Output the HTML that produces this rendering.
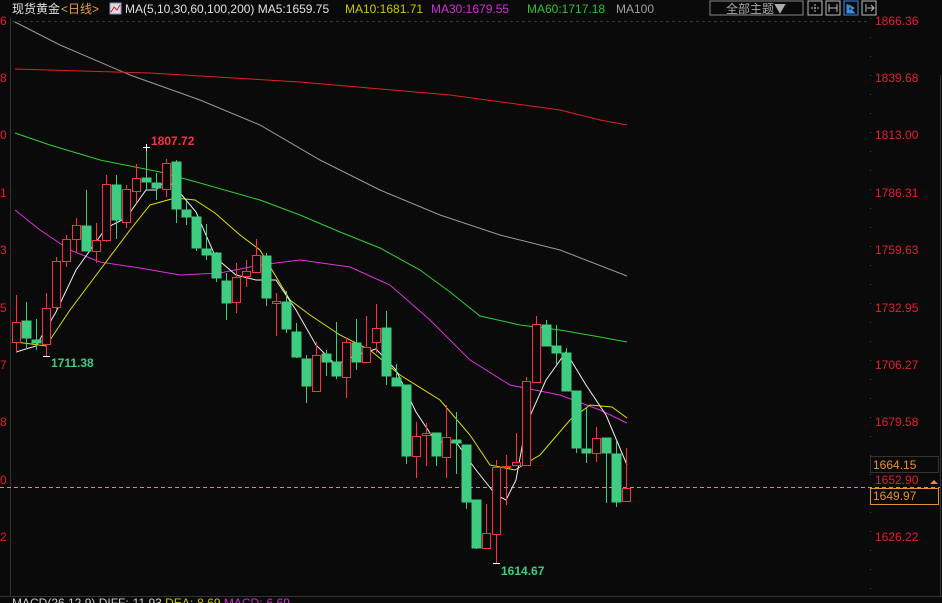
<!DOCTYPE html>
<html><head><meta charset="utf-8"><style>
html,body{margin:0;padding:0;background:#0a0a0a;width:942px;height:603px;overflow:hidden;font-family:"Liberation Sans","Noto Sans CJK SC",sans-serif}
</style></head><body>
<svg width="942" height="603" xmlns="http://www.w3.org/2000/svg" style="position:absolute;left:0;top:0">
<rect width="942" height="603" fill="#0a0a0a"/>
<!-- top bar -->
<g font-size="12" font-family="Liberation Sans,Noto Sans CJK SC,sans-serif">
<text x="12" y="13" fill="#e0e0e0">现货黄金</text>
<text x="61" y="13" fill="#e8a040">&lt;日线&gt;</text>
<rect x="110" y="3" width="11" height="11" fill="#ddd" stroke="#8888cc"/>
<polyline points="111,12 114,7 117,10 120,5" stroke="#d02020" fill="none"/>
<text x="125" y="13" fill="#e0e0e0">MA(5,10,30,60,100,200) MA5:1659.75</text>
<text x="345" y="13" fill="#c8c800">MA10:1681.71</text>
<text x="431" y="13" fill="#d030d0">MA30:1679.55</text>
<text x="527" y="13" fill="#30c030">MA60:1717.18</text>
<text x="616" y="13" fill="#a0a0a0">MA100</text>
</g>
<rect x="710" y="1" width="93" height="14" fill="none" stroke="#888"/>
<text x="726" y="13" fill="#aaa" font-size="12" font-family="Noto Sans CJK SC,sans-serif">全部主题▼</text>
<rect x="808" y="1" width="14" height="14" fill="none" stroke="#bbb"/>
<path d="M815 4v8M811 8h8" stroke="#bbb" stroke-dasharray="2 1"/>
<rect x="826" y="1" width="14" height="14" fill="none" stroke="#bbb"/>
<path d="M829 4v8M837 4v8M829 8h8" stroke="#bbb"/>
<rect x="844" y="1" width="14" height="14" fill="none" stroke="#3a8ee0"/>
<path d="M847 4v9h8M849 5l5 3-5 3z" stroke="#3a8ee0" fill="#3a8ee0"/>
<rect x="862" y="1" width="14" height="14" fill="none" stroke="#bbb"/>
<path d="M866 4v8M867 8h7M871 5l3 3-3 3" stroke="#bbb" fill="none"/>
<!-- frame -->
<line x1="10.5" y1="18" x2="10.5" y2="596" stroke="#333"/>
<line x1="870.5" y1="18" x2="870.5" y2="596" stroke="#444" stroke-dasharray="1 18"/>
<line x1="940.5" y1="75" x2="940.5" y2="596" stroke="#333"/>
<line x1="0" y1="596.5" x2="942" y2="596.5" stroke="#333"/>
<line x1="12" y1="21.5" x2="870" y2="21.5" stroke="#333" stroke-dasharray="3 3"/>
<g fill="#e02030" font-size="12">
<text x="0" y="25">6</text><text x="0" y="82">8</text><text x="0" y="139">0</text><text x="0" y="197">1</text><text x="0" y="254">3</text><text x="0" y="312">5</text><text x="0" y="369">7</text><text x="0" y="426">8</text><text x="0" y="484">0</text><text x="0" y="541">2</text>
<text x="875" y="25">1866.36</text><text x="875" y="82">1839.68</text><text x="875" y="139">1813.00</text><text x="875" y="197">1786.31</text><text x="875" y="254">1759.63</text><text x="875" y="312">1732.95</text><text x="875" y="369">1706.27</text><text x="875" y="426">1679.58</text><text x="875" y="484">1652.90</text><text x="875" y="541">1626.22</text>
</g>
<rect x="870.5" y="456.5" width="68" height="16" fill="#0a0a0a" stroke="#333"/>
<text x="873" y="469" fill="#e89030" font-size="12">1664.15</text>
<line x1="0" y1="487.5" x2="940" y2="487.5" stroke="#e89030" stroke-dasharray="4 3"/>
<rect x="870.5" y="488.5" width="68" height="16" fill="#0a0a0a" stroke="#e89030"/>
<text x="873" y="500" fill="#e89030" font-size="12">1649.97</text>
<path d="M930 484l4-4 4 4z" fill="#e89030"/>
<!-- MA lines -->
<g fill="none" stroke-width="1">
<polyline stroke="#999" points="15,22 60,45 130,75 200,100 260,125 320,160 380,190 440,215 500,235 560,250 627,276"/>
<polyline stroke="#e02020" points="15,69 150,73 300,82 450,95 560,110 600,120 627,125"/>
<polyline stroke="#30d030" points="15,133 50,145 100,160 160,172 200,183 260,200 300,215 340,232 380,248 420,270 450,292 480,316 520,325 560,330 600,337 627,342"/>
<polyline stroke="#e030e0" points="15,210 40,230 70,250 100,262 140,268 180,275 220,273 260,265 300,260 350,267 390,285 430,320 470,360 510,385 560,395 600,410 627,423"/>
<polyline stroke="#e0e000" points="16,342 46,346 70,310 100,270 130,230 150,205 175,198 195,200 215,213 240,235 260,250 290,300 310,315 340,335 370,350 400,375 440,400 470,435 490,465 515,470 540,455 570,420 590,405 612,407 627,418"/>
<polyline stroke="#f0f0f0" points="16,352 36,346 56,312 76,270 106,228 126,218 146,190 156,190 166,180 176,188 196,212 216,258 236,275 256,280 276,280 296,310 316,345 336,365 356,355 376,349 396,370 416,412 436,442 456,442 476,470 496,495 506,500 516,480 526,425 546,380 566,352 586,385 606,415 627,465"/>
</g>
<!-- candles -->
<g id="c" stroke-width="1">
<!-- G: filled green; R: hollow red -->
<g stroke="#3dcc80" fill="#3dcc80">
<line x1="26.5" y1="302" x2="26.5" y2="348"/><rect x="22" y="321" width="9" height="17"/>
<line x1="36.5" y1="319" x2="36.5" y2="350"/><rect x="32" y="340" width="9" height="3"/>
<line x1="86.5" y1="190" x2="86.5" y2="251"/><rect x="82" y="226" width="9" height="25"/>
<line x1="116.5" y1="175" x2="116.5" y2="239"/><rect x="112" y="185" width="9" height="35"/>
<line x1="146.5" y1="147" x2="146.5" y2="190"/><rect x="142" y="178" width="9" height="4"/>
<line x1="156.5" y1="173" x2="156.5" y2="200"/><rect x="152" y="183" width="9" height="5"/>
<line x1="176.5" y1="160" x2="176.5" y2="223"/><rect x="172" y="162" width="9" height="47"/>
<line x1="186.5" y1="201" x2="186.5" y2="225"/><rect x="182" y="210" width="9" height="7"/>
<line x1="196.5" y1="217" x2="196.5" y2="251"/><rect x="192" y="217" width="9" height="31"/>
<line x1="206.5" y1="224" x2="206.5" y2="260"/><rect x="202" y="249" width="9" height="6"/>
<line x1="216.5" y1="252" x2="216.5" y2="282"/><rect x="212" y="253" width="9" height="25"/>
<line x1="226.5" y1="273" x2="226.5" y2="320"/><rect x="222" y="281" width="9" height="22"/>
<line x1="266.5" y1="253" x2="266.5" y2="306"/><rect x="262" y="256" width="9" height="42"/>
<line x1="286.5" y1="291" x2="286.5" y2="333"/><rect x="282" y="302" width="9" height="27"/>
<line x1="296.5" y1="323" x2="296.5" y2="358"/><rect x="292" y="332" width="9" height="25"/>
<line x1="306.5" y1="355" x2="306.5" y2="403"/><rect x="302" y="359" width="9" height="27"/>
<line x1="326.5" y1="350" x2="326.5" y2="376"/><rect x="322" y="354" width="9" height="8"/>
<line x1="336.5" y1="322" x2="336.5" y2="379"/><rect x="332" y="362" width="9" height="14"/>
<line x1="356.5" y1="319" x2="356.5" y2="370"/><rect x="352" y="343" width="9" height="19"/>
<line x1="386.5" y1="311" x2="386.5" y2="385"/><rect x="382" y="328" width="9" height="48"/>
<line x1="396.5" y1="364" x2="396.5" y2="386"/><rect x="392" y="378" width="9" height="8"/>
<line x1="406.5" y1="385" x2="406.5" y2="464"/><rect x="402" y="385" width="9" height="71"/>
<line x1="436.5" y1="433" x2="436.5" y2="466"/><rect x="432" y="433" width="9" height="23"/>
<line x1="456.5" y1="412" x2="456.5" y2="474"/><rect x="452" y="440" width="9" height="3"/>
<line x1="466.5" y1="445" x2="466.5" y2="509"/><rect x="462" y="445" width="9" height="57"/>
<line x1="476.5" y1="500" x2="476.5" y2="549"/><rect x="472" y="500" width="9" height="48"/>
<line x1="546.5" y1="320" x2="546.5" y2="346"/><rect x="542" y="325" width="9" height="21"/>
<line x1="556.5" y1="325" x2="556.5" y2="364"/><rect x="552" y="346" width="9" height="7"/>
<line x1="566.5" y1="348" x2="566.5" y2="391"/><rect x="562" y="353" width="9" height="38"/>
<line x1="576.5" y1="391" x2="576.5" y2="453"/><rect x="572" y="391" width="9" height="57"/>
<line x1="586.5" y1="408" x2="586.5" y2="463"/><rect x="582" y="449" width="9" height="4"/>
<line x1="606.5" y1="438" x2="606.5" y2="503"/><rect x="602" y="438" width="9" height="15"/>
<line x1="616.5" y1="441" x2="616.5" y2="507"/><rect x="612" y="454" width="9" height="48"/>
</g>
<g stroke="#ff3040" fill="#0a0a0a">
<line x1="16.5" y1="295" x2="16.5" y2="352"/><rect x="12.5" y="322.5" width="8" height="20"/>
<line x1="46.5" y1="293" x2="46.5" y2="356"/><rect x="42.5" y="308.5" width="8" height="36"/>
<line x1="56.5" y1="257" x2="56.5" y2="310"/><rect x="52.5" y="261.5" width="8" height="46"/>
<line x1="66.5" y1="235" x2="66.5" y2="267"/><rect x="62.5" y="239.5" width="8" height="22"/>
<line x1="76.5" y1="218" x2="76.5" y2="253"/><rect x="72.5" y="225.5" width="8" height="14"/>
<line x1="96.5" y1="223" x2="96.5" y2="263"/><rect x="92.5" y="240.5" width="8" height="11"/>
<line x1="106.5" y1="175" x2="106.5" y2="242"/><rect x="102.5" y="184.5" width="8" height="56"/>
<line x1="126.5" y1="185" x2="126.5" y2="228"/><rect x="122.5" y="189.5" width="8" height="33"/>
<line x1="136.5" y1="164" x2="136.5" y2="202"/><rect x="132.5" y="178.5" width="8" height="13"/>
<line x1="166.5" y1="159" x2="166.5" y2="197"/><rect x="162.5" y="163.5" width="8" height="26"/>
<line x1="236.5" y1="263" x2="236.5" y2="313"/><rect x="232.5" y="277.5" width="8" height="25"/>
<line x1="246.5" y1="260" x2="246.5" y2="287"/><rect x="242.5" y="271.5" width="8" height="5"/>
<line x1="256.5" y1="239" x2="256.5" y2="272"/><rect x="252.5" y="255.5" width="8" height="17"/>
<line x1="276.5" y1="293" x2="276.5" y2="336"/><rect x="272.5" y="301.5" width="8" height="2"/>
<line x1="316.5" y1="342" x2="316.5" y2="391"/><rect x="312.5" y="355.5" width="8" height="36"/>
<line x1="346.5" y1="338" x2="346.5" y2="398"/><rect x="342.5" y="342.5" width="8" height="35"/>
<line x1="366.5" y1="316" x2="366.5" y2="362"/><rect x="362.5" y="347.5" width="8" height="15"/>
<line x1="376.5" y1="304" x2="376.5" y2="353"/><rect x="372.5" y="328.5" width="8" height="14"/>
<line x1="416.5" y1="422" x2="416.5" y2="478"/><rect x="412.5" y="436.5" width="8" height="20"/>
<line x1="426.5" y1="423" x2="426.5" y2="466"/><rect x="422.5" y="433.5" width="8" height="2"/>
<line x1="446.5" y1="405" x2="446.5" y2="478"/><rect x="442.5" y="437.5" width="8" height="20"/>
<line x1="486.5" y1="504" x2="486.5" y2="548"/><rect x="482.5" y="533.5" width="8" height="15"/>
<line x1="496.5" y1="460" x2="496.5" y2="563"/><rect x="492.5" y="467.5" width="8" height="67"/>
<line x1="506.5" y1="455" x2="506.5" y2="505"/><rect x="502.5" y="466.5" width="8" height="1"/>
<line x1="516.5" y1="433" x2="516.5" y2="465"/><rect x="512.5" y="462.5" width="8" height="3"/>
<line x1="526.5" y1="377" x2="526.5" y2="465"/><rect x="522.5" y="381.5" width="8" height="84"/>
<line x1="536.5" y1="316" x2="536.5" y2="382"/><rect x="532.5" y="324.5" width="8" height="58"/>
<line x1="596.5" y1="427" x2="596.5" y2="462"/><rect x="592.5" y="438.5" width="8" height="15"/>
<line x1="626.5" y1="448" x2="626.5" y2="501"/><rect x="622.5" y="488.5" width="8" height="13"/>
</g>
</g>
<!-- high/low markers -->
<path d="M143 147.5h7M146.5 144v7" stroke="#fff"/>
<text x="151" y="145" fill="#ff3040" font-size="12" font-weight="bold">1807.72</text>
<path d="M43 356.5h7" stroke="#fff"/>
<text x="51" y="367" fill="#3dcc80" font-size="12" font-weight="bold">1711.38</text>
<path d="M493 563.5h7" stroke="#fff"/>
<text x="501" y="575" fill="#3dcc80" font-size="12" font-weight="bold">1614.67</text>
<text x="12" y="607" fill="#ccc" font-size="12">MACD(26,12,9) DIFF:-11.93 <tspan fill="#c8c800">DEA:-8.69</tspan> <tspan fill="#d030d0">MACD:-6.69</tspan></text>
</svg>
</body></html>
